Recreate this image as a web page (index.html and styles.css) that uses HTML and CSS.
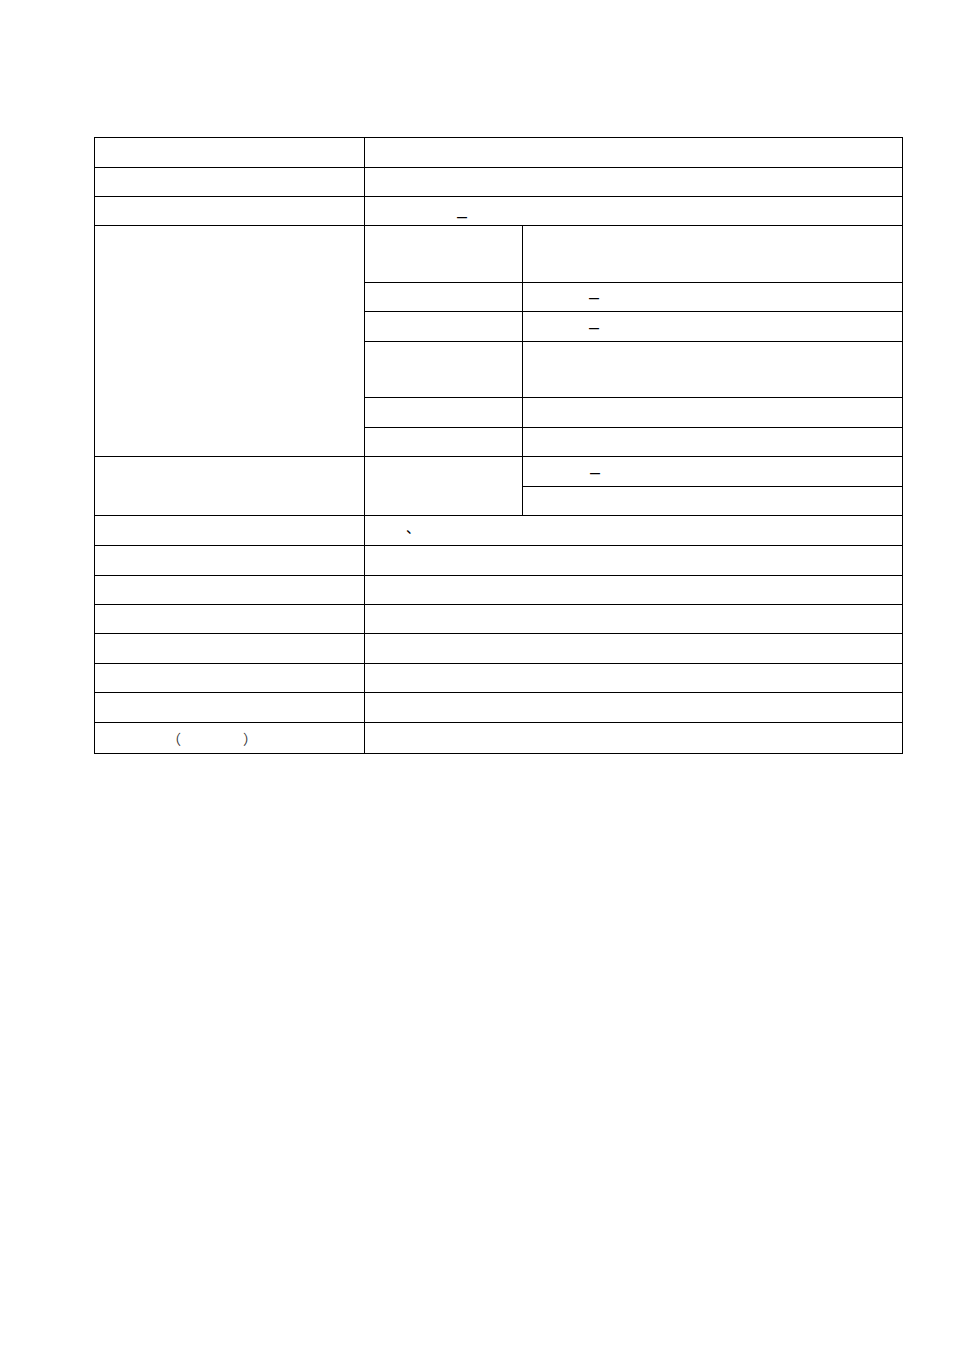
FILE: index.html
```html
<!DOCTYPE html>
<html lang="zh">
<head>
<meta charset="utf-8">
<title>表</title>
<link rel="stylesheet" href="styles.css">
</head>
<body>
<table class="sheet">
  <colgroup>
    <col class="c1">
    <col class="c2">
    <col class="c3">
  </colgroup>
  <tr class="h30"><td></td><td colspan="2"></td></tr>
  <tr class="h29"><td></td><td colspan="2"></td></tr>
  <tr class="h29"><td></td><td colspan="2" class="dash-cell low"><span class="dash d92">–</span></td></tr>
  <tr class="h57"><td rowspan="6"></td><td></td><td></td></tr>
  <tr class="h29"><td></td><td class="dash-cell"><span class="dash d66">–</span></td></tr>
  <tr class="h30"><td></td><td class="dash-cell"><span class="dash d66">–</span></td></tr>
  <tr class="h56"><td></td><td></td></tr>
  <tr class="h30"><td></td><td></td></tr>
  <tr class="h29"><td></td><td></td></tr>
  <tr class="h30"><td rowspan="2"></td><td rowspan="2"></td><td class="dash-cell"><span class="dash d67">–</span></td></tr>
  <tr class="h29"><td></td></tr>
  <tr class="h30"><td></td><td colspan="2" class="cjk-cell raised"><span class="comma">、</span></td></tr>
  <tr class="h30"><td></td><td colspan="2"></td></tr>
  <tr class="h29"><td></td><td colspan="2"></td></tr>
  <tr class="h29"><td></td><td colspan="2"></td></tr>
  <tr class="h30"><td></td><td colspan="2"></td></tr>
  <tr class="h29"><td></td><td colspan="2"></td></tr>
  <tr class="h30"><td></td><td colspan="2"></td></tr>
  <tr class="h31"><td class="cjk-cell"><span class="paren-open">（</span><span class="paren-close">）</span></td><td colspan="2"></td></tr>
</table>
</body>
</html>
```

FILE: styles.css
```css
html, body {
  margin: 0;
  padding: 0;
  background: #fff;
}

body {
  font-family: "Liberation Serif", "Noto Sans CJK SC", serif;
  color: #000;
}

.sheet {
  border-collapse: collapse;
  table-layout: fixed;
  width: 808px;
  margin: 137px 0 0 94px;
}

.c1 { width: 270px; }
.c2 { width: 158px; }
.c3 { width: 380px; }

.sheet td {
  border: 1px solid #000;
  padding: 0;
  vertical-align: middle;
  line-height: 1;
  font-size: 14px;
}

.h29 { height: 29px; }
.h30 { height: 30px; }
.h31 { height: 31px; }
.h56 { height: 56px; }
.h57 { height: 57px; }

.dash {
  font-family: "Liberation Sans", sans-serif;
  font-size: 18px;
  line-height: 1;
  display: inline-block;
}

.d92 { margin-left: 92px; }
.d66 { margin-left: 66px; }
.d67 { margin-left: 67px; }

.dash-cell.low {
  padding-top: 10px;
}

.cjk-cell {
  font-family: "Noto Sans CJK SC", sans-serif;
}

.cjk-cell.raised {
  padding-bottom: 8px;
}

.comma {
  display: inline-block;
  margin-left: 41px;
  font-size: 14px;
}

.paren-open {
  display: inline-block;
  margin-left: 72px;
  color: #333;
}

.paren-close {
  display: inline-block;
  margin-left: 62px;
  color: #333;
}
```
